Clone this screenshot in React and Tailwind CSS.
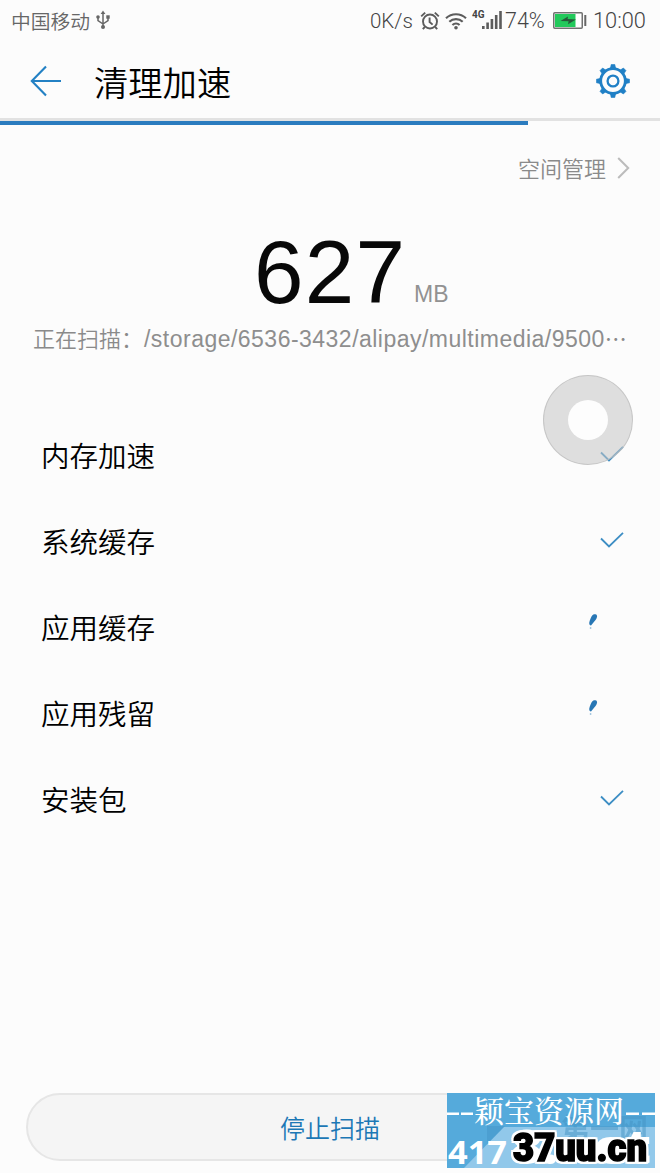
const ITEMS = [
  { id: "memory", label: "内存加速", done: true },
  { id: "system", label: "系统缓存", done: true },
  { id: "cache", label: "应用缓存", done: false },
  { id: "residue", label: "应用残留", done: false },
  { id: "apk", label: "安装包", done: true },
];

const GEAR_ANGLES = [0, 45, 90, 135, 180, 225, 270, 315];

function UsbIcon() {
  return (
    <svg width="14" height="20" viewBox="0 0 14 20" fill="none" stroke="#666" strokeWidth="1.5">
      <path d="M7 3v13M2 7v3.5L7 14M12 7v3.5L7 14" />
      <path d="M7 0.5l2.4 3.5H4.6z" fill="#666" stroke="none" />
      <circle cx="2" cy="7" r="1.8" fill="#666" stroke="none" />
      <rect x="10.3" y="5.3" width="3.4" height="3.4" fill="#666" stroke="none" />
      <circle cx="7" cy="17" r="2" fill="#666" stroke="none" />
    </svg>
  );
}

function AlarmIcon() {
  return (
    <svg width="20" height="20" viewBox="0 0 20 20" fill="none" stroke="#5c5c5c" strokeWidth="1.9">
      <circle cx="10" cy="10.5" r="7" />
      <path d="M9.6 6.5v4.5l3 2.6M1.2 5.4l4-3.8M18.8 5.4l-4-3.8M4.8 16l-2 2.2M15.2 16l2 2.2" />
    </svg>
  );
}

function WifiIcon() {
  return (
    <svg width="22" height="18" viewBox="0 0 22 18" fill="none" stroke="#5c5c5c" strokeWidth="2.1">
      <path d="M1 6.2a14.5 14.5 0 0 1 20 0M4.3 9.8a9.7 9.7 0 0 1 13.4 0M7.4 13a5.2 5.2 0 0 1 7.2 0" />
      <circle cx="11" cy="15.7" r="1.8" fill="#5c5c5c" stroke="none" />
    </svg>
  );
}

function SignalIcon() {
  return (
    <svg width="20" height="18" viewBox="0 0 20 18" fill="#5c5c5c">
      <rect x="0" y="15" width="2.6" height="3" />
      <rect x="4.3" y="11.5" width="2.6" height="6.5" />
      <rect x="8.6" y="8" width="2.6" height="10" />
      <rect x="12.9" y="4" width="2.6" height="14" />
      <rect x="17.2" y="0" width="2.6" height="18" />
    </svg>
  );
}

function BatteryIcon() {
  return (
    <svg width="34" height="17" viewBox="0 0 34 17">
      <rect x="0.75" y="0.75" width="28.5" height="15.5" rx="1" fill="#fff" stroke="#707070" strokeWidth="1.5" />
      <rect x="2" y="2" width="20.5" height="13" fill="#22c95b" />
      <path d="M7.5 9l7.5-4.5-.4 2.6 8.4.4-8 4.8.6-3z" fill="#28593a" />
      <rect x="31.3" y="3" width="2" height="11" fill="#666" />
    </svg>
  );
}

function BackIcon() {
  return (
    <svg width="32" height="32" viewBox="0 0 32 32" fill="none" stroke="#2381c4" strokeWidth="2.1">
      <path d="M16 1.5L1.8 16 16 30.5M1.8 16H31" />
    </svg>
  );
}

function GearIcon() {
  return (
    <svg width="34" height="34" viewBox="-17 -17 34 34" fill="none" stroke="#2080c6">
      <circle r="12.3" strokeWidth="2.8" />
      <circle r="5.4" strokeWidth="2.3" />
      {GEAR_ANGLES.map((angle) => (
        <path
          key={angle}
          d="M-2.6 -12.8L-1.8 -16.5H1.8L2.6 -12.8z"
          fill="#2080c6"
          strokeWidth="0.6"
          transform={`rotate(${angle})`}
        />
      ))}
    </svg>
  );
}

function CheckIcon() {
  return (
    <svg width="24" height="16" viewBox="0 0 24 16" fill="none" stroke="#3d8ec4" strokeWidth="1.8">
      <path d="M1 6.5l8 8L23 0.9" />
    </svg>
  );
}

function SpinnerIcon() {
  return (
    <svg width="10" height="16" viewBox="0 0 10 16" fill="#2877b5">
      <path d="M4.2 1.4C5.4 0 8.2-.2 8.9 1.4c.5 1.7-.7 3.9-2.2 5.7L3 11.4C1.3 11.4 1 9.7 1.4 8 2 5.5 3 3 4.2 1.4z" />
      <circle cx="2.6" cy="14" r="0.9" fill="#9fc3dd" />
    </svg>
  );
}

function StatusBar() {
  return (
    <div className="flex h-10 items-center pl-[11px] text-xl text-[#666]">
      <span className="mt-px w-[80px] whitespace-nowrap text-[19.8px] font-[350] leading-5">中国移动</span>
      <span className="ml-[5px]">
        <UsbIcon />
      </span>
      <div className="ml-auto flex h-10 w-[290px] items-center pt-0.5 font-['Roboto'] font-light text-[#444]">
        <span className="w-[50px] text-[20.5px]">0K/s</span>
        <AlarmIcon />
        <span className="ml-[5px]">
          <WifiIcon />
        </span>
        <span className="ml-[5px] mt-[7px] w-3 self-start text-[10px] font-bold leading-3">4G</span>
        <span className="-ml-0.5 mb-0.5">
          <SignalIcon />
        </span>
        <span className="ml-[3px] w-[48px] text-[21.5px]">74%</span>
        <span className="-mt-0.5">
          <BatteryIcon />
        </span>
        <span className="ml-[6px] text-[21.8px]">10:00</span>
      </div>
    </div>
  );
}

function Watermark() {
  return (
    <svg
      className="absolute left-[447px] top-[1093px]"
      width="208"
      height="75"
      viewBox="0 0 208 75"
    >
      <rect width="208" height="75" fill="#55aadb" />
      <path d="M40 33h17l15 18H40z" fill="#4c9fd1" />
      <path d="M17 75L57 34h151v41z" fill="#91c8ea" />
      <text x="114" y="47" fontSize="29" fontWeight="700" fill="#4594c4" opacity="0.5" fontFamily="Noto Sans CJK SC, sans-serif">
        第一网
      </text>
      <g fill="#fff">
        <rect x="0" y="19.5" width="12" height="2.5" />
        <rect x="14" y="19.5" width="12" height="2.5" />
        <rect x="179" y="19.5" width="13" height="2.5" />
        <rect x="195" y="19.5" width="13" height="2.5" />
      </g>
      <text x="27" y="28.5" fontSize="30" fontWeight="500" fill="#fff" textLength="150" fontFamily="Noto Serif CJK SC, Noto Sans CJK SC, serif">
        颖宝资源网
      </text>
      <text x="1" y="71" fontSize="33" fontWeight="700" fill="#fff" textLength="59" lengthAdjust="spacingAndGlyphs" fontFamily="Open Sans, sans-serif">
        417
      </text>
      <text x="64" y="70" fontSize="44" fontWeight="700" fill="#fff" stroke="#fff" strokeWidth="2" textLength="139" lengthAdjust="spacingAndGlyphs" fontFamily="Open Sans, sans-serif">
        8.net
      </text>
      <g className="[filter:drop-shadow(2px_0_white)_drop-shadow(-2px_0_white)_drop-shadow(0_2px_white)_drop-shadow(0_-2px_white)]">
        <text x="66" y="68" fontSize="39" fontWeight="900" fill="#000" stroke="#000" strokeWidth="1.6" textLength="134" lengthAdjust="spacingAndGlyphs" fontFamily="Roboto, sans-serif">
          37uu.cn
        </text>
      </g>
    </svg>
  );
}

export default function App() {
  return (
    <div className="relative flex h-[1173px] w-[660px] flex-col overflow-hidden bg-[#fcfcfc] font-['Noto_Sans_CJK_SC',sans-serif]">
      <StatusBar />

      {/* Title bar */}
      <header className="flex h-[78px] items-center pl-[30px] pr-[30px]">
        <span className="mt-[3px]">
          <BackIcon />
        </span>
        <h1 className="ml-8 h-[50px] whitespace-nowrap text-[34.3px] font-[350] leading-[54px] text-black">清理加速</h1>
        <span className="ml-auto mt-[3px]">
          <GearIcon />
        </span>
      </header>

      {/* Scan progress */}
      <div className="h-[7px] shrink-0">
        <div className="h-[3px] bg-[#e2e2e2]" />
        <div className="h-1 w-[528px] bg-[#2b7cbf]" />
      </div>

      <div className="flex h-[87px] items-center justify-end pr-[30px] text-[#8a8a8a]">
        <span className="-mt-[3px] text-[22px] font-[350] leading-8">空间管理</span>
        <svg className="-mt-0.5 ml-[11px]" width="13" height="22" viewBox="0 0 13 22" fill="none" stroke="#bcbcbc" strokeWidth="2">
          <path d="M1.2 1l10 10-10 10" />
        </svg>
      </div>

      <div className="flex h-[110px] items-end pl-[254px] font-['Liberation_Sans']">
        <span className="w-[160px] whitespace-nowrap text-[89px] leading-[100px] tracking-[1.2px] text-[#080808]">627</span>
        <span className="mb-3 text-[23px] leading-8 text-[#929292]">MB</span>
      </div>

      <div className="flex h-8 items-center whitespace-nowrap pl-[33px] text-[#8a8a8a]">
        <span className="-mt-0.5 w-[111px] text-[22px] font-[350]">正在扫描：</span>
        <span className="mt-0.5 font-['Liberation_Sans'] text-[23px] tracking-[0.48px] text-[#8e8e8e]">
          /storage/6536-3432/alipay/multimedia/9500
        </span>
        <span className="-mt-0.5 text-[22px]">⋯</span>
      </div>

      {/* Scan categories */}
      <ul className="mt-[58px]">
        {ITEMS.map((item) => (
          <li key={item.id} className="flex h-[86px] items-center pl-[41px] pr-9">
            <span className="text-[28.5px] font-[350] leading-10 text-black">{item.label}</span>
            {item.done ? (
              <span className="mb-0.5 ml-auto">
                <CheckIcon />
              </span>
            ) : (
              <span className="mb-2.5 ml-auto mr-[26px]">
                <SpinnerIcon />
              </span>
            )}
          </li>
        ))}
      </ul>

      <button className="mx-[26px] mb-3 mt-auto h-[68px] rounded-full border-2 border-[#e6e6e6] bg-[#f5f5f5] pt-px text-[25px] font-[350] text-[#1c78b5]">
        停止扫描
      </button>

      {/* Floating assist button */}
      <div className="absolute left-[543px] top-[375px] flex h-[90px] w-[90px] items-center justify-center rounded-full border border-[#bcbcbc]/70 bg-[#c4c4c4]/55">
        <div className="h-10 w-10 rounded-full bg-[#fdfdfd]" />
      </div>

      <Watermark />
    </div>
  );
}
